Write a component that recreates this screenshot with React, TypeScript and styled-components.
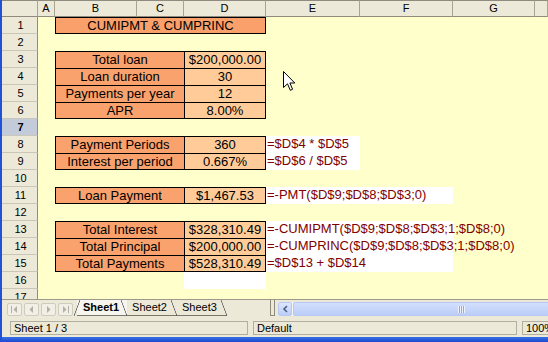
import React from 'react';
import styled, { createGlobalStyle, css } from 'styled-components';

const Global = createGlobalStyle`
  html, body { margin: 0; padding: 0; width: 548px; height: 342px; overflow: hidden; background: #ECE9D8; }
  #root { width: 548px; height: 342px; }
`;

const Window = styled.div`
  position: relative;
  box-sizing: border-box;
  width: 548px;
  height: 342px;
  display: flex;
  flex-direction: column;
  border-left: 2px solid #2151D9;
  background: #ECE9D8;
  font-family: "Liberation Sans", Arial, sans-serif;
  overflow: hidden;
`;

const Sheet = styled.div`
  display: grid;
  grid-template-columns: 36px 17px 82px 47px 82px 94px 93px 82px 1fr;
  grid-template-rows: repeat(18, 17px);
  height: 299px;
  flex: none;
  overflow: hidden;
  background: #FFFFCC;
`;

const ColHead = styled.div<{ $col: number }>`
  grid-row: 1;
  grid-column: ${p => p.$col};
  box-sizing: border-box;
  background: #ECE9D8;
  border-top: 1px solid #8F8C7F;
  border-right: 1px solid #A7A491;
  border-bottom: 1px solid #8F8C7F;
  font-size: 11px;
  line-height: 15px;
  text-align: center;
  color: #000;
`;

const RowHead = styled.div<{ $row: number; $active?: boolean }>`
  grid-row: ${p => p.$row + 1};
  grid-column: 1;
  box-sizing: border-box;
  background: ${p => (p.$active ? '#C3CAD9' : '#ECE9D8')};
  border-right: 1px solid #8F8C7F;
  border-bottom: 1px solid #CBC7B8;
  font-size: 11px;
  font-weight: ${p => (p.$active ? 700 : 400)};
  line-height: 16px;
  text-align: center;
  padding-left: 2px;
  color: #000;
`;

type Tone = 'title' | 'label' | 'value' | 'formula' | 'blank';

const toneBg: Record<Tone, string> = {
  title: '#F9A06B',
  label: '#F9A26D',
  value: '#FFCC99',
  formula: '#FFFFFF',
  blank: '#FFFFFF',
};

const Cell = styled.div<{
  $row: number;
  $col: number;
  $span: number;
  $tone: Tone;
  $boxed: boolean;
  $right: boolean;
  $bottom: boolean;
}>`
  grid-row: ${p => p.$row + 1};
  grid-column: ${p => p.$col} / span ${p => p.$span};
  box-sizing: border-box;
  min-width: 0;
  background: ${p => toneBg[p.$tone]};
  font-size: 13px;
  line-height: 16px;
  white-space: nowrap;
  color: ${p => (p.$tone === 'formula' ? '#800000' : '#000')};
  text-align: ${p => (p.$tone === 'formula' ? 'left' : 'center')};
  padding-left: ${p => (p.$tone === 'formula' ? '1px' : '0')};
  overflow: visible;
  ${p =>
    p.$boxed &&
    css`
      border-left: 1px solid #000;
      border-top: 1px solid #000;
      border-right: ${p.$right ? '1px solid #000' : '0'};
      border-bottom: ${p.$bottom ? '1px solid #000' : '0'};
    `}
`;

interface CellDef {
  row: number;
  col: number;
  span?: number;
  tone: Tone;
  text?: string;
  right?: boolean;
  bottom?: boolean;
}

const B = 3;
const D = 5;
const E = 6;

const tableRows: { row: number; label: string; value: string; formula?: string; fspan?: number; last?: boolean }[] = [
  { row: 3, label: 'Total loan', value: '$200,000.00' },
  { row: 4, label: 'Loan duration', value: '30' },
  { row: 5, label: 'Payments per year', value: '12' },
  { row: 6, label: 'APR', value: '8.00%', last: true },
  { row: 8, label: 'Payment Periods', value: '360', formula: '=$D$4 * $D$5', fspan: 1 },
  { row: 9, label: 'Interest per period', value: '0.667%', formula: '=$D$6 / $D$5', fspan: 1, last: true },
  { row: 11, label: 'Loan Payment', value: '$1,467.53', formula: '=-PMT($D$9;$D$8;$D$3;0)', fspan: 2, last: true },
  { row: 13, label: 'Total Interest', value: '$328,310.49', formula: '=-CUMIPMT($D$9;$D$8;$D$3;1;$D$8;0)', fspan: 2 },
  { row: 14, label: 'Total Principal', value: '$200,000.00', formula: '=-CUMPRINC($D$9;$D$8;$D$3;1;$D$8;0)', fspan: 2 },
  { row: 15, label: 'Total Payments', value: '$528,310.49', formula: '=$D$13 + $D$14', fspan: 2, last: true },
];

const cells: CellDef[] = [
  { row: 1, col: B, span: 3, tone: 'title', text: 'CUMIPMT & CUMPRINC', right: true, bottom: true },
  ...tableRows.flatMap(r => {
    const list: CellDef[] = [
      { row: r.row, col: B, span: 2, tone: 'label', text: r.label, bottom: r.last },
      { row: r.row, col: D, span: 1, tone: 'value', text: r.value, right: true, bottom: r.last },
    ];
    if (r.formula) list.push({ row: r.row, col: E, span: r.fspan, tone: 'formula', text: r.formula });
    return list;
  }),
  { row: 16, col: D, span: 1, tone: 'blank' },
];

// The H column header is off-screen in the picture, so its label is not shown.
const letters = ['A', 'B', 'C', 'D', 'E', 'F', 'G', ''];

const TabBar = styled.div`
  display: flex;
  align-items: flex-start;
  height: 18px;
  flex: none;
  background: #ECE9D8;
  border-top: 1px solid #9D9A8C;
  box-sizing: border-box;
`;

const NavGroup = styled.div`
  display: flex;
  flex: none;
  gap: 2px;
  padding: 3px 0 0 5px;
`;

const NavButton = styled.div`
  width: 15px;
  height: 13px;
  box-sizing: border-box;
  border: 1px solid #CFCCBE;
  border-radius: 2px;
  background: #F1EFE6;
  display: flex;
  align-items: center;
  justify-content: center;
`;

const Tabs = styled.div`
  display: flex;
  flex: none;
  margin-left: 4px;
  width: 193px;
`;

const Tab = styled.div<{ $active?: boolean }>`
  position: relative;
  height: 16px;
  box-sizing: border-box;
  padding: 0 ${p => (p.$active ? '8px' : '10px')} 0 ${p => (p.$active ? '6px' : '5px')};
  font-size: 11px;
  line-height: 15px;
  font-weight: ${p => (p.$active ? 700 : 400)};
  color: #000;
  background: ${p => (p.$active ? '#F6F5EF' : 'transparent')};
  border-bottom: 1px solid #7A786C;
  &::after {
    content: '';
    position: absolute;
    right: 0;
    top: 0;
    width: 6px;
    height: 16px;
    background: linear-gradient(to top right, transparent calc(50% - 0.7px), #555 50%, transparent calc(50% + 0.7px));
  }
  ${p =>
    p.$active &&
    css`
      &::before {
        content: '';
        position: absolute;
        left: -3px;
        top: 0;
        width: 6px;
        height: 16px;
        background: linear-gradient(to bottom right, transparent calc(50% - 0.7px), #555 50%, transparent calc(50% + 0.7px));
      }
    `}
`;

const Splitter = styled.div`
  width: 5px;
  height: 16px;
  flex: none;
  box-sizing: border-box;
  border: 1px solid #8F8C7F;
  border-top: 0;
  background: #ECE9D8;
`;

const HScroll = styled.div`
  flex: 1;
  display: flex;
  gap: 1px;
  height: 14px;
  margin: 2px 0 0 3px;
  background: #F7F6F0;
`;

const ScrollButton = styled.div`
  width: 14px;
  height: 14px;
  flex: none;
  box-sizing: border-box;
  border: 1px solid #B7C9F2;
  border-radius: 2px;
  background: linear-gradient(#DCE6FE, #BCCEF8);
  display: flex;
  align-items: center;
  justify-content: center;
`;

const Thumb = styled.div`
  flex: 1;
  height: 14px;
  box-sizing: border-box;
  border: 1px solid #B7C9F2;
  border-right: 0;
  border-radius: 2px 0 0 2px;
  background: linear-gradient(#D3DFFD, #BACDF8);
  display: flex;
  align-items: center;
  justify-content: center;
  padding-left: 80px;
`;

const Grip = styled.div`
  width: 7px;
  height: 7px;
  background: repeating-linear-gradient(to right, #EEF3FF 0 1px, #90A8E0 1px 2px);
`;

const StatusBar = styled.div`
  display: flex;
  gap: 5px;
  height: 20px;
  flex: none;
  padding: 4px 0 0 8px;
  box-sizing: border-box;
  background: #ECE9D8;
`;

const Field = styled.div<{ $w: number }>`
  width: ${p => p.$w}px;
  flex: none;
  height: 14px;
  box-sizing: border-box;
  border: 1px solid #B2AFA1;
  font-size: 11px;
  line-height: 13px;
  padding-left: 3px;
  color: #000;
  white-space: nowrap;
  overflow: hidden;
`;

const TaskEdge = styled.div`
  flex: 1;
  background: linear-gradient(#3A6FE6, #1C4BCF);
`;

const Pointer = styled.svg`
  position: absolute;
  left: 281px;
  top: 71px;
`;

const Arrow = ({ dir }: { dir: 'first' | 'prev' | 'next' | 'last' }) => {
  const c = '#B4B1A4';
  return (
    <svg width="9" height="9" viewBox="0 0 9 9">
      {dir === 'first' && (
        <>
          <rect x="1" y="1" width="1" height="7" fill={c} />
          <path d="M7 1 L3.5 4.5 L7 8 Z" fill={c} />
        </>
      )}
      {dir === 'prev' && <path d="M6 1 L2.5 4.5 L6 8 Z" fill={c} />}
      {dir === 'next' && <path d="M3 1 L6.5 4.5 L3 8 Z" fill={c} />}
      {dir === 'last' && (
        <>
          <path d="M2 1 L5.5 4.5 L2 8 Z" fill={c} />
          <rect x="7" y="1" width="1" height="7" fill={c} />
        </>
      )}
    </svg>
  );
};

export default function App() {
  return (
    <>
      <Global />
      <Window>
        <Sheet>
          <ColHead $col={1} />
          {letters.map((l, i) => (
            <ColHead key={i} $col={i + 2}>
              {l}
            </ColHead>
          ))}
          {Array.from({ length: 17 }, (_, i) => (
            <RowHead key={i} $row={i + 1} $active={i + 1 === 7}>
              {i + 1}
            </RowHead>
          ))}
          {cells.map((c, i) => (
            <Cell
              key={i}
              $row={c.row}
              $col={c.col}
              $span={c.span ?? 1}
              $tone={c.tone}
              $boxed={c.tone !== 'formula' && c.tone !== 'blank'}
              $right={!!c.right}
              $bottom={!!c.bottom}
            >
              {c.text}
            </Cell>
          ))}
        </Sheet>
        <TabBar>
          <NavGroup>
            <NavButton><Arrow dir="first" /></NavButton>
            <NavButton><Arrow dir="prev" /></NavButton>
            <NavButton><Arrow dir="next" /></NavButton>
            <NavButton><Arrow dir="last" /></NavButton>
          </NavGroup>
          <Tabs>
            <Tab $active>Sheet1</Tab>
            <Tab>Sheet2</Tab>
            <Tab>Sheet3</Tab>
          </Tabs>
          <Splitter />
          <HScroll>
            <ScrollButton>
              <svg width="7" height="8" viewBox="0 0 7 8">
                <path d="M5 1 L2 4 L5 7" fill="none" stroke="#4D6185" strokeWidth="1.6" />
              </svg>
            </ScrollButton>
            <Thumb>
              <Grip />
            </Thumb>
          </HScroll>
        </TabBar>
        <StatusBar>
          <Field $w={238}>Sheet 1 / 3</Field>
          <Field $w={264}>Default</Field>
          <Field $w={40}>100%</Field>
        </StatusBar>
        <TaskEdge />
        <Pointer width="13" height="21" viewBox="0 0 13 21">
          <path
            d="M0.5 0.5 L0.5 16.5 L4.5 12.8 L7.3 19.3 L9.6 18.3 L6.9 12 L11.8 12 Z"
            fill="#FFFFFF"
            stroke="#000000"
            strokeWidth="1"
            strokeLinejoin="miter"
          />
        </Pointer>
      </Window>
    </>
  );
}
